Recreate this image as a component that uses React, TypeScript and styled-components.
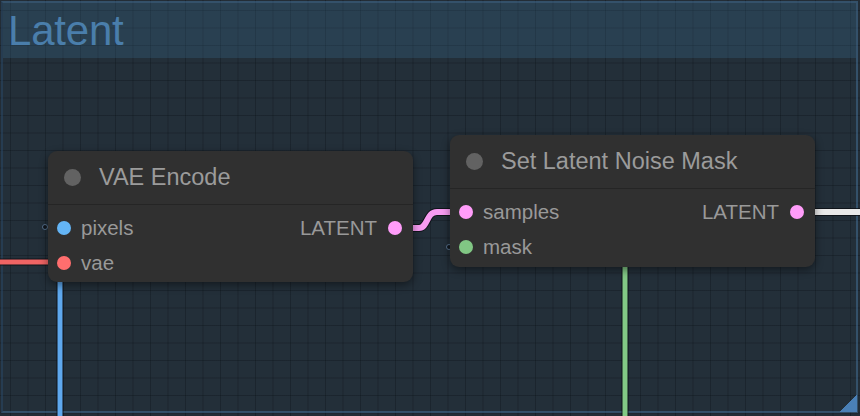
import React from 'react';
import styled, { createGlobalStyle } from 'styled-components';

const GlobalStyle = createGlobalStyle`
  html, body { margin: 0; padding: 0; background: #232d36; }
  body { font-family: "Liberation Sans", Arial, sans-serif; }
  * { box-sizing: border-box; }
`;

const Canvas = styled.div`
  position: relative;
  width: 860px;
  height: 416px;
  overflow: hidden;
  background-color: #232d36;
  background-image:
    linear-gradient(to right, rgba(8, 14, 20, 0.32) 1px, transparent 1px),
    linear-gradient(to bottom, rgba(8, 14, 20, 0.32) 1px, transparent 1px);
  background-size: 17.5px 17.5px;
  background-position: 10px 10px;
`;

const Group = styled.div`
  position: absolute;
  left: 1px;
  top: 1px;
  right: 2px;
  bottom: 3px;
  display: flex;
  flex-direction: column;
  border: 2px solid rgba(75, 125, 170, 0.45);
  border-left-color: rgba(40, 70, 100, 0.6);
`;

const GroupTitle = styled.div`
  height: 55px;
  display: flex;
  align-items: center;
  padding-left: 5px;
  background: rgba(63, 120, 158, 0.26);
  color: #4a7eab;
  font-size: 42px;
  line-height: 1;
  letter-spacing: -0.2px;
`;

const GroupBody = styled.div`
  flex: 1;
  background: rgba(63, 120, 158, 0.03);
`;

const ResizeHandle = styled.div`
  position: absolute;
  right: -1px;
  bottom: -1px;
  width: 18px;
  height: 18px;
  background: linear-gradient(135deg, transparent 50%, #4a80b6 50%);
`;

const Links = styled.svg`
  position: absolute;
  left: 0;
  top: 0;
  width: 860px;
  height: 416px;
`;

const Node = styled.div<{ $x: number; $y: number; $w: number; $h: number }>`
  position: absolute;
  left: ${(p) => p.$x}px;
  top: ${(p) => p.$y}px;
  width: ${(p) => p.$w}px;
  height: ${(p) => p.$h}px;
  display: flex;
  flex-direction: column;
  background: #303030;
  border-radius: 9px;
  box-shadow: 0 3px 8px rgba(0, 0, 0, 0.45);
`;

const NodeTitle = styled.div`
  height: 54px;
  display: flex;
  align-items: center;
  gap: 18px;
  padding-left: 16px;
  border-bottom: 1px solid rgba(0, 0, 0, 0.22);
  color: #9b9b9b;
  font-size: 23.5px;
`;

const TitleDot = styled.span`
  width: 17px;
  height: 17px;
  border-radius: 50%;
  background: #626262;
  flex: none;
`;

const NodeBody = styled.div`
  display: flex;
  flex-direction: column;
  padding-top: 5px;
`;

const SlotRow = styled.div`
  height: 35px;
  display: flex;
  align-items: center;
  justify-content: space-between;
`;

const Slot = styled.div<{ $out?: boolean }>`
  display: flex;
  align-items: center;
  flex-direction: ${(p) => (p.$out ? 'row-reverse' : 'row')};
  gap: ${(p) => (p.$out ? 11 : 10)}px;
  padding-left: ${(p) => (p.$out ? 0 : 9)}px;
  padding-right: ${(p) => (p.$out ? 11 : 0)}px;
  color: #999999;
  font-size: 20.5px;
`;

const SlotDot = styled.span<{ $color: string }>`
  width: 14px;
  height: 14px;
  border-radius: 50%;
  background: ${(p) => p.$color};
  flex: none;
`;

type SlotDef = { label: string; color: string };

const NodeBox: React.FC<{
  x: number; y: number; w: number; h: number;
  title: string; inputs: SlotDef[]; outputs: SlotDef[];
}> = ({ x, y, w, h, title, inputs, outputs }) => {
  const rows = Math.max(inputs.length, outputs.length);
  return (
    <Node $x={x} $y={y} $w={w} $h={h}>
      <NodeTitle>
        <TitleDot />
        <span>{title}</span>
      </NodeTitle>
      <NodeBody>
        {Array.from({ length: rows }).map((_, i) => (
          <SlotRow key={i}>
            {inputs[i] ? (
              <Slot>
                <SlotDot $color={inputs[i].color} />
                <span>{inputs[i].label}</span>
              </Slot>
            ) : <span />}
            {outputs[i] ? (
              <Slot $out>
                <SlotDot $color={outputs[i].color} />
                <span>{outputs[i].label}</span>
              </Slot>
            ) : <span />}
          </SlotRow>
        ))}
      </NodeBody>
    </Node>
  );
};

const Link: React.FC<{ d: string; color: string; width?: number }> = ({ d, color, width = 5 }) => (
  <g fill="none" strokeLinecap="butt" strokeLinejoin="round">
    <path d={d} stroke="rgba(10,12,16,0.75)" strokeWidth={width + 2} />
    <path d={d} stroke={color} strokeWidth={width} />
  </g>
);

export default function App() {
  return (
    <>
      <GlobalStyle />
      <Canvas>
        <Group>
          <GroupTitle>Latent</GroupTitle>
          <GroupBody />
          <ResizeHandle />
        </Group>
        <Links viewBox="0 0 860 416">
          <Link d="M -10 262 L 64 262" color="#ef6464" />
          <Link d="M 60 227 L 60 430" color="#5ea8ee" />
          <Link d="M 625 240 L 625 430" color="#82c985" />
          <Link d="M 798 212 L 880 212" color="#e9e9e9" width={6} />
          <Link d="M 395 228 L 419 228 C 428 228, 426 212, 437 212 L 467 212" color="#f79cf2" width={6} />
          <circle cx="45" cy="227" r="2.5" fill="#10161c" stroke="#56708c" strokeWidth="1" />
          <circle cx="449" cy="247" r="2.5" fill="#10161c" stroke="#56708c" strokeWidth="1" />
        </Links>
        <NodeBox
          x={48} y={151} w={365} h={131}
          title="VAE Encode"
          inputs={[{ label: 'pixels', color: '#64b5f6' }, { label: 'vae', color: '#ff6e6e' }]}
          outputs={[{ label: 'LATENT', color: '#ff9cf9' }]}
        />
        <NodeBox
          x={450} y={135} w={365} h={132}
          title="Set Latent Noise Mask"
          inputs={[{ label: 'samples', color: '#ff9cf9' }, { label: 'mask', color: '#81c784' }]}
          outputs={[{ label: 'LATENT', color: '#ff9cf9' }]}
        />
      </Canvas>
    </>
  );
}
